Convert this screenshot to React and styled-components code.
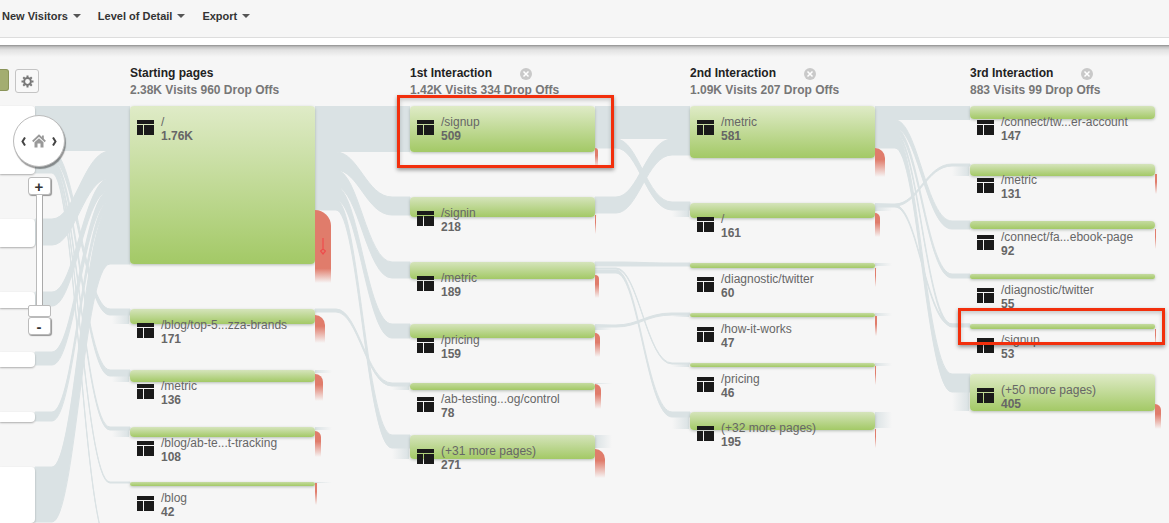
import styled, { createGlobalStyle } from "styled-components";

const colors = {
  page: "#f6f6f6",
  flow: "#dae2e4",
  title: "#222222",
  text: "#666666",
  drop: "#e07c6b",
  highlight: "#f22f0c",
};

const columns = [
  {
    title: "Starting pages",
    summary: "2.38K Visits 960 Drop Offs",
    x: 130,
    nodes: [
      { label: "/", visits: "1.76K", y: 0, h: 158, drop: { y: 104, w: 16, h: 73 } },
      { label: "/blog/top-5...zza-brands", visits: "171", y: 203, h: 15, drop: { y: 209, w: 10, h: 28 } },
      { label: "/metric", visits: "136", y: 264, h: 12, drop: { y: 268, w: 8, h: 27 } },
      { label: "/blog/ab-te...t-tracking", visits: "108", y: 321, h: 10, drop: { y: 325, w: 6, h: 26 } },
      { label: "/blog", visits: "42", y: 376, h: 4, drop: { y: 377, w: 2, h: 22 } },
    ],
  },
  {
    title: "1st Interaction",
    summary: "1.42K Visits 334 Drop Offs",
    x: 410,
    closable: true,
    nodes: [
      { label: "/signup", visits: "509", y: 0, h: 46, drop: { y: 42, w: 3, h: 19 } },
      { label: "/signin", visits: "218", y: 91, h: 20, drop: { y: 109, w: 1, h: 19 } },
      { label: "/metric", visits: "189", y: 156, h: 17, drop: { y: 169, w: 4, h: 23 } },
      { label: "/pricing", visits: "159", y: 218, h: 14, drop: { y: 227, w: 5, h: 24 } },
      { label: "/ab-testing...og/control", visits: "78", y: 277, h: 7, drop: { y: 278, w: 6, h: 25 } },
      { label: "(+31 more pages)", visits: "271", y: 329, h: 24, drop: { y: 343, w: 10, h: 29 } },
    ],
  },
  {
    title: "2nd Interaction",
    summary: "1.09K Visits 207 Drop Offs",
    x: 690,
    closable: true,
    nodes: [
      { label: "/metric", visits: "581", y: 0, h: 52, drop: { y: 42, w: 10, h: 29 } },
      { label: "/", visits: "161", y: 97, h: 15, drop: { y: 107, w: 5, h: 24 } },
      { label: "/diagnostic/twitter", visits: "60", y: 157, h: 5, drop: { y: 162, w: 1, h: 19 } },
      { label: "/how-it-works", visits: "47", y: 207, h: 4, drop: { y: 210, w: 2, h: 20 } },
      { label: "/pricing", visits: "46", y: 257, h: 4, drop: { y: 260, w: 1, h: 19 } },
      { label: "(+32 more pages)", visits: "195", y: 306, h: 18, drop: { y: 323, w: 1, h: 19 } },
    ],
  },
  {
    title: "3rd Interaction",
    summary: "883 Visits 99 Drop Offs",
    x: 970,
    closable: true,
    nodes: [
      { label: "/connect/tw...er-account", visits: "147", y: 0, h: 13 },
      { label: "/metric", visits: "131", y: 58, h: 12, drop: { y: 68, w: 2, h: 20 } },
      { label: "/connect/fa...ebook-page", visits: "92", y: 115, h: 8, drop: { y: 123, w: 1, h: 20 } },
      { label: "/diagnostic/twitter", visits: "55", y: 168, h: 5 },
      { label: "/signup", visits: "53", y: 218, h: 5, drop: { y: 223, w: 1, h: 16 } },
      { label: "(+50 more pages)", visits: "405", y: 268, h: 37, drop: { y: 298, w: 6, h: 25 } },
    ],
  },
];

// right ends of the segment column that is scrolled out to the left
const segments = [
  { y: 0, h: 68 },
  { y: 113, h: 28 },
  { y: 186, h: 16 },
  { y: 246, h: 15 },
  { y: 306, h: 10 },
  { y: 361, h: 56 },
];

// [from y, from height, to y, to height]
const flows = [
  {
    x0: 35,
    x1: 130,
    bend: [52, 110],
    links: [
      [0, 45, 0, 45],
      [45, 9, 203, 6],
      [54, 5, 264, 6],
      [59, 4, 321, 3],
      [63, 2, 376, 1],
      [65, 2, 440, 1],
      [113, 26, 45, 27],
      [186, 14, 72, 12],
      [246, 13, 84, 11],
      [306, 9, 95, 8],
      [361, 55, 103, 55],
    ],
  },
  {
    x0: 315,
    x1: 410,
    bend: [336, 392],
    links: [
      [0, 46, 0, 46],
      [46, 18, 91, 18],
      [64, 17, 156, 16],
      [81, 13, 218, 14],
      [94, 10, 329, 13],
      [203, 3, 277, 3],
    ],
  },
  {
    x0: 595,
    x1: 690,
    bend: [616, 672],
    links: [
      [0, 33, 0, 33],
      [33, 9, 96, 8],
      [91, 16, 33, 16],
      [156, 4, 157, 3],
      [162, 1, 257, 1],
      [164, 3, 306, 5],
      [219, 2, 207, 2],
    ],
  },
  {
    x0: 875,
    x1: 970,
    bend: [895, 952],
    links: [
      [0, 14, 0, 14],
      [14, 8, 115, 8],
      [22, 5, 168, 4],
      [27, 3, 218, 3],
      [30, 12, 268, 18],
      [98, 2, 58, 2],
      [99, 2, 218, 2],
    ],
  },
];

// traffic that leaves or enters the shown set: [x, y, height, side]
const stubs = [
  [315, 264, 3, "out"],
  [315, 321, 3, "out"],
  [315, 376, 1, "out"],
  [595, 329, 13, "out"],
  [595, 218, 6, "out"],
  [595, 277, 1, "out"],
  [875, 97, 8, "out"],
  [875, 157, 3, "out"],
  [875, 207, 3, "out"],
  [875, 257, 3, "out"],
  [875, 306, 16, "out"],
  [112, 209, 9, "in"],
  [112, 270, 6, "in"],
  [112, 324, 7, "in"],
  [392, 342, 11, "in"],
  [392, 280, 4, "in"],
  [672, 104, 7, "in"],
  [672, 311, 12, "in"],
  [672, 207, 4, "in"],
  [672, 257, 4, "in"],
  [952, 60, 10, "in"],
  [952, 286, 19, "in"],
];

function ribbon({ x0, x1, bend }, [y0, h0, y1, h1]) {
  const [a, b] = bend;
  const near = a + (b - a) * 0.4;
  const far = a + (b - a) * 0.55;
  return (
    `M${x0} ${y0}H${a}C${near} ${y0} ${far} ${y1} ${b} ${y1}H${x1}` +
    `V${y1 + h1}H${b}C${far} ${y1 + h1} ${near} ${y0 + h0} ${a} ${y0 + h0}H${x0}Z`
  );
}

function FlowLines() {
  return (
    <FlowSvg aria-hidden="true">
      <defs>
        <linearGradient id="fade-out">
          <stop offset="0" stopColor={colors.flow} />
          <stop offset="1" stopColor={colors.flow} stopOpacity="0" />
        </linearGradient>
        <linearGradient id="fade-in">
          <stop offset="0" stopColor={colors.flow} stopOpacity="0" />
          <stop offset="1" stopColor={colors.flow} />
        </linearGradient>
      </defs>
      {flows.map((group) =>
        group.links.map((link) => (
          <path
            key={`${group.x0}-${link}`}
            d={ribbon(group, link)}
            fill={colors.flow}
            stroke={colors.flow}
            strokeWidth={link[0] === link[2] ? 0 : 1}
          />
        ))
      )}
      {stubs.map(([x, y, h, side]) => (
        <rect key={`${x}-${y}`} x={x} y={y} width="17" height={h} fill={`url(#fade-${side})`} />
      ))}
    </FlowSvg>
  );
}

function PageIcon() {
  return (
    <svg width="17" height="15" fill="#1a1a1a" aria-hidden="true">
      <path d="M0 0h17v4H0zM0 5h6v10H0zM7 5h10v10H7z" />
    </svg>
  );
}

function GearIcon() {
  return (
    <svg width="13" height="13" viewBox="-6.5 -6.5 13 13" stroke="#777" aria-hidden="true">
      <circle r="3.4" fill="none" strokeWidth="2" />
      {[0, 45, 90, 135, 180, 225, 270, 315].map((angle) => (
        <path key={angle} d="M0-4V-6" strokeWidth="2" transform={`rotate(${angle})`} />
      ))}
    </svg>
  );
}

function CloseIcon() {
  return (
    <svg width="12" height="12" aria-hidden="true">
      <circle cx="6" cy="6" r="6" fill="#c9c9c9" />
      <path d="M3.5 3.5l5 5M8.5 3.5l-5 5" stroke="#fff" strokeWidth="1.5" />
    </svg>
  );
}

function Chevron({ flip }) {
  return (
    <svg width="5" height="9" fill="none" stroke="#444" strokeWidth="2" aria-hidden="true">
      <path d={flip ? "M1 .5l2.5 4L1 8.5" : "M4 .5L1.5 4.5 4 8.5"} />
    </svg>
  );
}

function HomeIcon() {
  return (
    <svg width="14" height="14" viewBox="0 0 14 14" aria-hidden="true">
      <path d="M.7 7.5L7 1.5l6.300 6" fill="none" stroke="#999" strokeWidth="1.8" />
      <path d="M10 1.5h1.8v4L10 3.8z" fill="#999" />
      <path d="M2.5 8.3L7 4.2l4.500 4.100v5.200h-3v-4h-3v4h-3z" fill="#999" />
    </svg>
  );
}

export default function App() {
  return (
    <>
      <GlobalStyle />
      <Toolbar>
        {["New Visitors", "Level of Detail", "Export"].map((name) => (
          <MenuButton key={name}>
            {name}
            <Caret />
          </MenuButton>
        ))}
      </Toolbar>
      <Board>
        <Headings>
          <Controls>
            <DimensionButton aria-label="Dimension" />
            <SettingsButton aria-label="Settings">
              <GearIcon />
            </SettingsButton>
          </Controls>
          {columns.map((column) => (
            <Heading key={column.title}>
              <TitleRow>
                <Title>{column.title}</Title>
                {column.closable && (
                  <CloseButton aria-label={`Remove ${column.title}`}>
                    <CloseIcon />
                  </CloseButton>
                )}
              </TitleRow>
              <Summary>{column.summary}</Summary>
            </Heading>
          ))}
        </Headings>
        <Canvas>
          <FlowLines />
          {segments.map((segment) => (
            <Segment key={segment.y} $y={segment.y} $h={segment.h} />
          ))}
          {columns.map((column) =>
            column.nodes.map((node) => (
              <Node key={column.x + node.label} $x={column.x} $y={node.y} $h={node.h}>
                <PageIcon />
                <NodeText>
                  <span>{node.label}</span>
                  <strong>{node.visits}</strong>
                </NodeText>
              </Node>
            ))
          )}
          {columns.map((column) =>
            column.nodes
              .filter((node) => node.drop)
              .map(({ label, drop }) => (
                <DropOff key={column.x + label} $x={column.x + 185} $y={drop.y} $w={drop.w} $h={drop.h}>
                  {drop.w > 12 && (
                    <svg width="6" height="17" fill="none" stroke="#ee4c4c" aria-hidden="true">
                      <path d="M3 0v11M3 11l2.5 2L3 16 .5 13z" strokeWidth="1.2" />
                    </svg>
                  )}
                </DropOff>
              ))
          )}
          <Navigator>
            <HomePad>
              <PadButton aria-label="Back">
                <Chevron />
              </PadButton>
              <PadButton aria-label="Home">
                <HomeIcon />
              </PadButton>
              <PadButton aria-label="Forward">
                <Chevron flip />
              </PadButton>
            </HomePad>
            <ZoomButton>+</ZoomButton>
            <ZoomSlider type="range" min="0" max="10" defaultValue="0" aria-label="Zoom" />
            <ZoomButton>-</ZoomButton>
          </Navigator>
          <Highlight $x={397} $y={-11} $w={217} $h={73} />
          <Highlight $x={958} $y={202} $w={207} $h={37} />
        </Canvas>
      </Board>
    </>
  );
}

const GlobalStyle = createGlobalStyle`
  * {
    box-sizing: border-box;
  }
  body {
    margin: 0;
    background: ${colors.page};
    color: ${colors.text};
    font-family: "Liberation Sans", Arial, sans-serif;
    font-size: 12px;
    overflow: hidden;
  }
  button {
    margin: 0;
    padding: 0;
    border: none;
    background: none;
    font-family: inherit;
    cursor: pointer;
  }
  svg {
    display: block;
    flex-shrink: 0;
  }
`;

const Toolbar = styled.nav`
  display: flex;
  align-items: flex-start;
  gap: 17px;
  padding: 8px 2px 13px;
  border-bottom: 1px solid #dddddd;
`;

const MenuButton = styled.button`
  display: flex;
  align-items: center;
  gap: 5px;
  color: #333333;
  font-size: 11px;
  font-weight: bold;
  line-height: 16px;
`;

const Caret = styled.span`
  border: 4px solid transparent;
  border-top-color: #555555;
  border-bottom: none;
`;

const Board = styled.main`
  border-top: 7px solid #ffffff;
  background: linear-gradient(#8f8f8f, #c4c4c4 2px, #e2e2e2 5px, ${colors.page} 12px);
`;

const Headings = styled.header`
  display: grid;
  grid-template-columns: 130px repeat(3, 280px) 1fr;
  padding: 20px 0 7px;
`;

const Controls = styled.div`
  display: flex;
  align-items: flex-start;
  gap: 6px;
  padding-top: 4px;
`;

const DimensionButton = styled.button`
  width: 9px;
  height: 22px;
  border: 1px solid #8a9459;
  border-left: none;
  border-radius: 0 3px 3px 0;
  background: #a3ad70;
`;

const SettingsButton = styled.button`
  display: flex;
  align-items: center;
  justify-content: center;
  width: 24px;
  height: 24px;
  border: 1px solid #c4c4c4;
  border-radius: 3px;
  background: #f8f8f8;
`;

const Heading = styled.div`
  line-height: 17px;
  white-space: nowrap;
`;

const TitleRow = styled.div`
  display: flex;
  align-items: center;
  gap: 28px;
`;

const Title = styled.h2`
  margin: 0;
  color: ${colors.title};
  font-size: 12px;
`;

const CloseButton = styled.button`
  height: 12px;
`;

const Summary = styled.p`
  margin: 0;
  color: #777777;
  font-weight: bold;
`;

const Canvas = styled.section`
  position: relative;
  min-height: 417px;
`;

const FlowSvg = styled.svg`
  width: 100%;
  height: 417px;
`;

const Segment = styled.div`
  position: absolute;
  left: 0;
  top: ${(props) => props.$y}px;
  width: 35px;
  height: ${(props) => props.$h}px;
  border-radius: 0 4px 4px 0;
  background: #ffffff;
  box-shadow: 0 1px 2px rgba(0, 0, 0, 0.3);
`;

const Node = styled.div`
  position: absolute;
  left: ${(props) => props.$x}px;
  top: ${(props) => props.$y}px;
  display: flex;
  align-items: flex-start;
  gap: 7px;
  width: 185px;
  height: ${(props) => props.$h}px;
  padding: 0 7px;
  border-radius: ${(props) => (props.$h > 6 ? 4 : 2)}px;
  background: linear-gradient(
    ${(props) => (props.$h > 30 ? "#dfebc7" : props.$h > 8 ? "#d5e4bb" : "#c5dba0")},
    #a3c966
  );
  box-shadow: 0 1px 3px rgba(90, 110, 90, 0.4);

  svg {
    margin-top: 14px;
  }
`;

const NodeText = styled.div`
  display: flex;
  flex-direction: column;
  margin-top: 9px;
  line-height: 14px;
  white-space: nowrap;
`;

const DropOff = styled.div`
  position: absolute;
  left: ${(props) => props.$x}px;
  top: ${(props) => props.$y}px;
  display: flex;
  align-items: center;
  justify-content: center;
  width: ${(props) => props.$w}px;
  height: ${(props) => props.$h}px;
  border-top-right-radius: ${(props) => (props.$w > 2 ? props.$w : 0)}px;
  background: linear-gradient(
    ${colors.drop} ${(props) => (props.$h > 50 ? 80 : 40)}%,
    rgba(224, 124, 107, 0)
  );
`;

const Navigator = styled.div`
  position: absolute;
  left: 13px;
  top: 9px;
  display: flex;
  flex-direction: column;
  align-items: center;
`;

const HomePad = styled.div`
  display: flex;
  align-items: center;
  justify-content: center;
  gap: 6px;
  width: 52px;
  height: 52px;
  margin-bottom: 10px;
  border: 1px solid #bbbbbb;
  border-radius: 50%;
  background: #ffffff;
  box-shadow: 1px 2px 1px rgba(0, 0, 0, 0.4);
`;

const PadButton = styled.button`
  display: flex;
`;

const ZoomButton = styled.button`
  width: 23px;
  height: 18px;
  border: 1px solid #bbbbbb;
  border-radius: 3px;
  background: #ffffff;
  box-shadow: 1px 1px 1px rgba(0, 0, 0, 0.4);
  color: #333333;
  font-size: 15px;
  font-weight: bold;
  line-height: 15px;
`;

const ZoomSlider = styled.input`
  appearance: none;
  writing-mode: vertical-lr;
  direction: rtl;
  width: 23px;
  height: 122px;
  margin: 0;
  background: linear-gradient(
    to right,
    transparent 8px,
    #bbbbbb 8px 9px,
    #ffffff 9px 14px,
    #aaaaaa 14px 15px,
    transparent 15px
  );

  &::-webkit-slider-thumb {
    appearance: none;
    width: 23px;
    height: 12px;
    border: 1px solid #bbbbbb;
    border-radius: 2px;
    background: #ffffff;
  }
`;

const Highlight = styled.div`
  position: absolute;
  left: ${(props) => props.$x}px;
  top: ${(props) => props.$y}px;
  width: ${(props) => props.$w}px;
  height: ${(props) => props.$h}px;
  border: 3px solid ${colors.highlight};
  box-shadow: 0 2px 4px rgba(0, 0, 0, 0.4), inset 0 2px 4px rgba(0, 0, 0, 0.2);
  pointer-events: none;
`;
